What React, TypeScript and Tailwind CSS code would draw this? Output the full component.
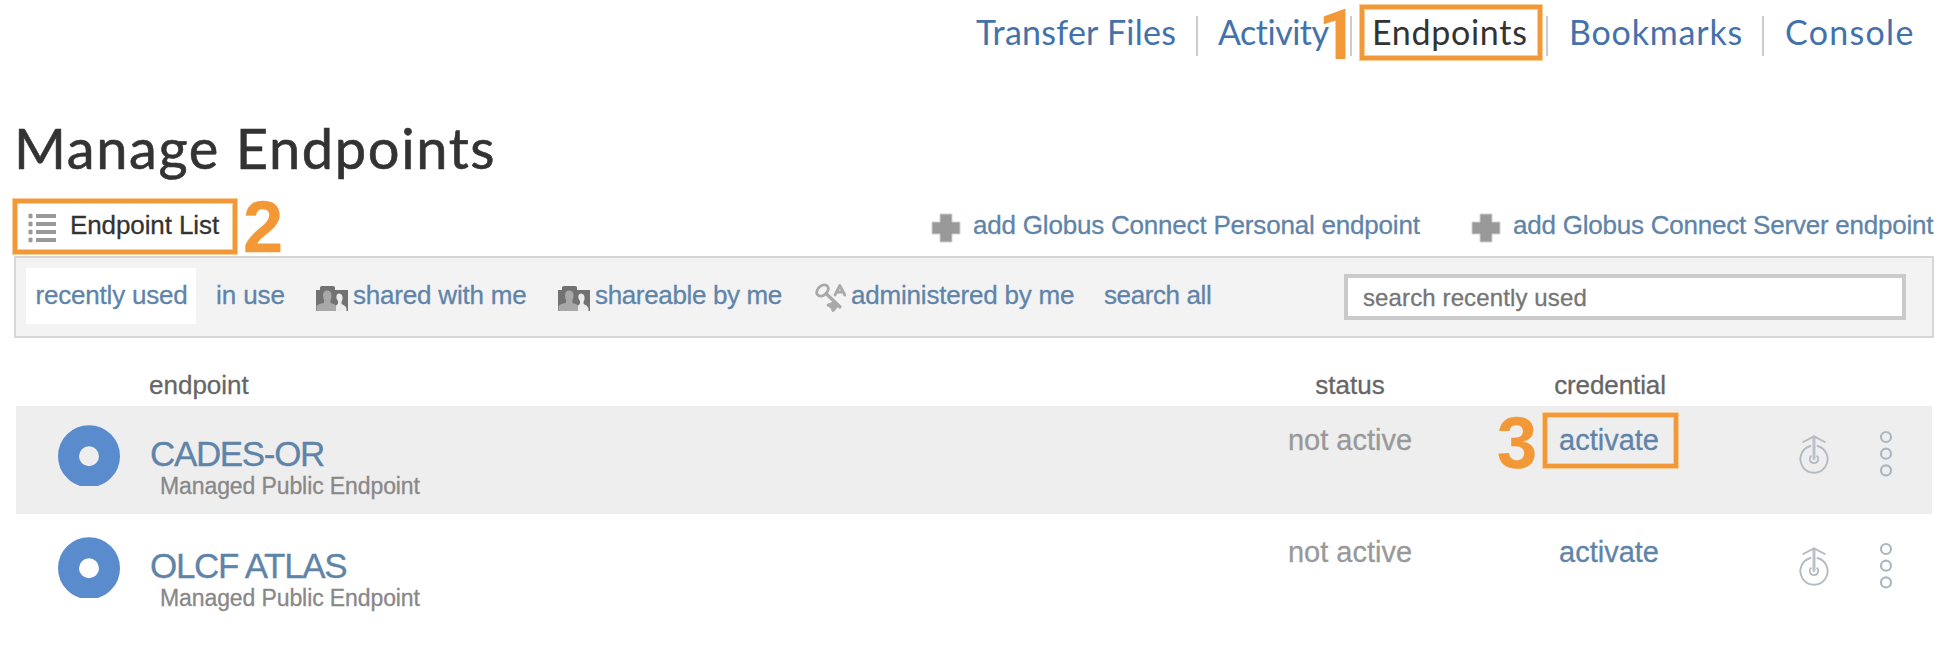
import React from "react";

const frame =
  "border-4 border-[#f29836] shadow-[0_0_0_1px_#f8cd98,inset_0_0_0_1px_#f8cd98]";

function ListIcon() {
  return (
    <svg width="30" height="30" viewBox="0 0 30 30" fill="#999999" className="block">
      {[1, 9, 17, 25].map((y) => (
        <g key={y}>
          <rect x="0.5" y={y - 0.2} width="4" height="4.4" rx="0.8" />
          <rect x="8" y={y} width="20" height="4" rx="0.6" />
        </g>
      ))}
    </svg>
  );
}

function PlusIcon() {
  return (
    <svg width="30" height="30" viewBox="0 0 30 30" className="block">
      <path
        d="M9 1H21V9H29V21H21V29H9V21H1V9H9Z"
        fill="#999999"
        stroke="#d0d0d0"
        strokeWidth="1"
      />
    </svg>
  );
}

function PeopleIcon() {
  return (
    <svg width="32" height="25" viewBox="0 0 32 25" className="block">
      <path d="M0 25V4H4V1.5Q4 0 6 0H17Q19 0 19 1.5V4H32V25Z" fill="#727272" />
      <path
        d="M0.500 25V20Q2 18 8 17V14Q7 12 7 9Q7.200 4.500 11.200 4.500Q15.300 4.500 15.500 9Q15.500 12 14.500 14V17Q19 18 20.500 20V25Z"
        fill="#a8a8a8"
      />
      <path
        d="M20 25V19.500Q21.700 18.500 22 17.500V15Q20.300 13.500 20.300 11Q20.500 7.500 23 7.500Q26.600 7.800 26.600 12Q26.600 14 25.600 15.500V18Q29.500 19.500 30.500 22V25Z"
        fill="#ececec"
      />
    </svg>
  );
}

function KeyIcon() {
  return (
    <svg
      width="32"
      height="30"
      viewBox="0 0 32 30"
      fill="none"
      stroke="#a9a9a9"
      strokeWidth="2.800"
      strokeLinecap="round"
      strokeLinejoin="round"
      className="block"
    >
      <ellipse cx="7.500" cy="7.500" rx="6.600" ry="4.600" transform="rotate(-42 7.500 7.500)" />
      <path d="M11 10.500L25 24" strokeWidth="3.200" />
      <path d="M19.500 19.500L13 22L16.500 24L18 27.500L20 25.500L22.500 22" fill="#a9a9a9" />
      <path d="M20 12L24.800 2.500L29.800 12M22.300 9H27.500" />
    </svg>
  );
}

function UploadIcon() {
  return (
    <svg
      width="32"
      height="42"
      viewBox="0 0 32 42"
      fill="none"
      stroke="#b3bac2"
      strokeWidth="1.900"
      strokeLinecap="round"
      className="block"
    >
      <path d="M12.500 12A13.600 13.600 0 1 0 19.500 12" />
      <path d="M12.800 22.200A4.200 4.200 0 1 0 19.200 22.200" />
      <path d="M16 24.500V3" stroke="#bcc2c9" strokeWidth="3" />
      <path d="M5.200 8L16 2.300L26.800 8" strokeLinejoin="round" />
    </svg>
  );
}

function DotsIcon() {
  return (
    <svg
      width="14"
      height="50"
      viewBox="0 0 14 50"
      fill="none"
      stroke="#adb6bf"
      strokeWidth="2.200"
      className="block"
    >
      <circle cx="7" cy="8" r="5" />
      <circle cx="7" cy="24.700" r="5" />
      <circle cx="7" cy="41.400" r="5" />
    </svg>
  );
}

function DiscIcon() {
  return (
    <svg width="62" height="61" viewBox="0 0 62 61" className="block">
      <circle cx="31" cy="31.200" r="20.500" fill="none" stroke="#598bcd" strokeWidth="21" />
    </svg>
  );
}

function Row({ name, tracking, shaded, marked }: {
  name: string;
  tracking: string;
  shaded?: boolean;
  marked?: boolean;
}) {
  return (
    <div
      className={`grid h-[108px] grid-cols-[134px_1fr_176px_342px_152px] ${shaded ? "bg-[#eeeeee]" : ""}`}
    >
      <div className="pl-[42px] pt-[19px]">
        <DiscIcon />
      </div>
      <div className="pt-[30px]">
        <div className={`text-[35px] leading-[36px] text-[#5f84a9] ${tracking}`}>{name}</div>
        <div className="pl-[10px] text-[23px] leading-[28px] tracking-[-0.1px] text-[#888888]">
          Managed Public Endpoint
        </div>
      </div>
      <div className="text-center text-[29px] leading-[69px] text-[#999999]">not active</div>
      <div className="relative text-center text-[29px] leading-[69px] text-[#5f84a9]">
        activate
        {marked && (
          <>
            <span className={`absolute left-[105px] top-[7px] h-[55px] w-[135px] ${frame}`} />
            <span className="absolute left-[59px] top-px text-[72px] font-bold leading-[72px] text-[#f29836]">
              3
            </span>
          </>
        )}
      </div>
      <div className="flex pl-[18px]">
        <div className="pt-[28px]">
          <UploadIcon />
        </div>
        <div className="pl-[49px] pt-[23px]">
          <DotsIcon />
        </div>
      </div>
    </div>
  );
}

export default function App() {
  return (
    <div className="h-[652px] w-[1948px] bg-white font-['Liberation_Sans',sans-serif] [-webkit-text-stroke:0.3px]">
      <nav className="flex h-[112px] items-start whitespace-nowrap pl-[960px] pt-4 font-['Lato',sans-serif] text-[34px] leading-[31px] text-[#4372ab] [-webkit-text-stroke:0px]">
        <a className="h-10 w-[238px] border-r-2 border-[#cccccc] pl-4 tracking-[0.250px]">
          Transfer Files
        </a>
        <a className="relative h-10 w-[154px] border-r-2 border-[#cccccc] pl-5 tracking-[-0.500px]">
          Activity
          <span className="absolute left-[120px] top-[-16px] font-['Roboto',sans-serif] text-[70px] font-bold leading-[70px] tracking-normal text-[#f29836]">
            1
          </span>
        </a>
        <a className="relative h-10 w-[196px] border-r-2 border-[#cccccc] pl-[20px] tracking-[0.700px] text-[#333333]">
          Endpoints
          <span className={`absolute left-2 top-[-11px] h-[55px] w-[182px] ${frame}`} />
        </a>
        <a className="h-10 w-[216px] border-r-2 border-[#cccccc] pl-[21px] tracking-[0.800px]">
          Bookmarks
        </a>
        <a className="h-10 pl-[21px] tracking-[1.300px]">Console</a>
      </nav>

      <h1 className="h-[87px] pl-[14px] font-['Lato',sans-serif] text-[56px] leading-[71px] tracking-[1.600px] text-[#333333] [-webkit-text-stroke:0.6px]">
        Manage Endpoints
      </h1>

      <div className="flex h-[57px] items-start whitespace-nowrap pl-[13px] pr-[15px] text-[26px] text-[#5f84a9]">
        <div className={`flex h-[55px] w-[224px] pl-[11px] ${frame}`}>
          <div className="pt-[10px]">
            <ListIcon />
          </div>
          <span className="pl-[12px] leading-[44px] tracking-[-0.100px] text-[#333333]">
            Endpoint List
          </span>
        </div>
        <span className="ml-[6px] text-[72px] font-bold leading-[56px] text-[#f29836]">2</span>
        <div className="ml-auto flex">
          <div className="pt-[14px]">
            <PlusIcon />
          </div>
          <span className="w-[498px] pl-[12px] leading-[52px] tracking-[-0.200px]">
            add Globus Connect Personal endpoint
          </span>
        </div>
        <div className="ml-[12px] flex">
          <div className="pt-[14px]">
            <PlusIcon />
          </div>
          <span className="w-[432px] pl-[12px] leading-[52px] tracking-[-0.220px]">
            add Globus Connect Server endpoint
          </span>
        </div>
      </div>

      <div className="ml-[14px] flex h-[82px] w-[1920px] items-start whitespace-nowrap border-2 border-[#d6d6d6] bg-[#f3f3f3] pl-[10px] pt-[10px] text-[26px] leading-[54px] text-[#5f84a9]">
        <div className="h-[56px] w-[170px] bg-white pl-[9.500px] tracking-[-0.200px]">
          recently used
        </div>
        <div className="w-[120px] pl-5 tracking-[-0.100px]">in use</div>
        <div className="flex w-[242px] gap-[5px] tracking-[-0.200px]">
          <div className="pt-[18px]">
            <PeopleIcon />
          </div>
          shared with me
        </div>
        <div className="flex w-[257px] gap-[5px] tracking-[-0.350px]">
          <div className="pt-[18px]">
            <PeopleIcon />
          </div>
          shareable by me
        </div>
        <div className="flex w-[289px] gap-1 tracking-[-0.200px]">
          <div className="pt-[15px]">
            <KeyIcon />
          </div>
          administered by me
        </div>
        <div className="w-[240px] tracking-[-0.400px]">search all</div>
        <div className="mt-[6px] h-[46px] w-[562px] border-4 border-[#cacaca] bg-white pl-[15px] text-[24px] leading-[39px] tracking-[0.120px] text-[#757575]">
          search recently used
        </div>
      </div>

      <div className="ml-4 w-[1916px]">
        <div className="grid h-[68px] grid-cols-[133px_1fr_176px_342px_152px] pt-[26px] text-[26px] leading-[42px] text-[#666666]">
          <div />
          <div>endpoint</div>
          <div className="text-center">status</div>
          <div className="pl-[2px] text-center tracking-[-0.100px]">credential</div>
          <div />
        </div>
        <div className="flex flex-col gap-1">
          <Row name="CADES-OR" tracking="tracking-[-1.350px]" shaded marked />
          <Row name="OLCF ATLAS" tracking="tracking-[-1.300px]" />
        </div>
      </div>
    </div>
  );
}
